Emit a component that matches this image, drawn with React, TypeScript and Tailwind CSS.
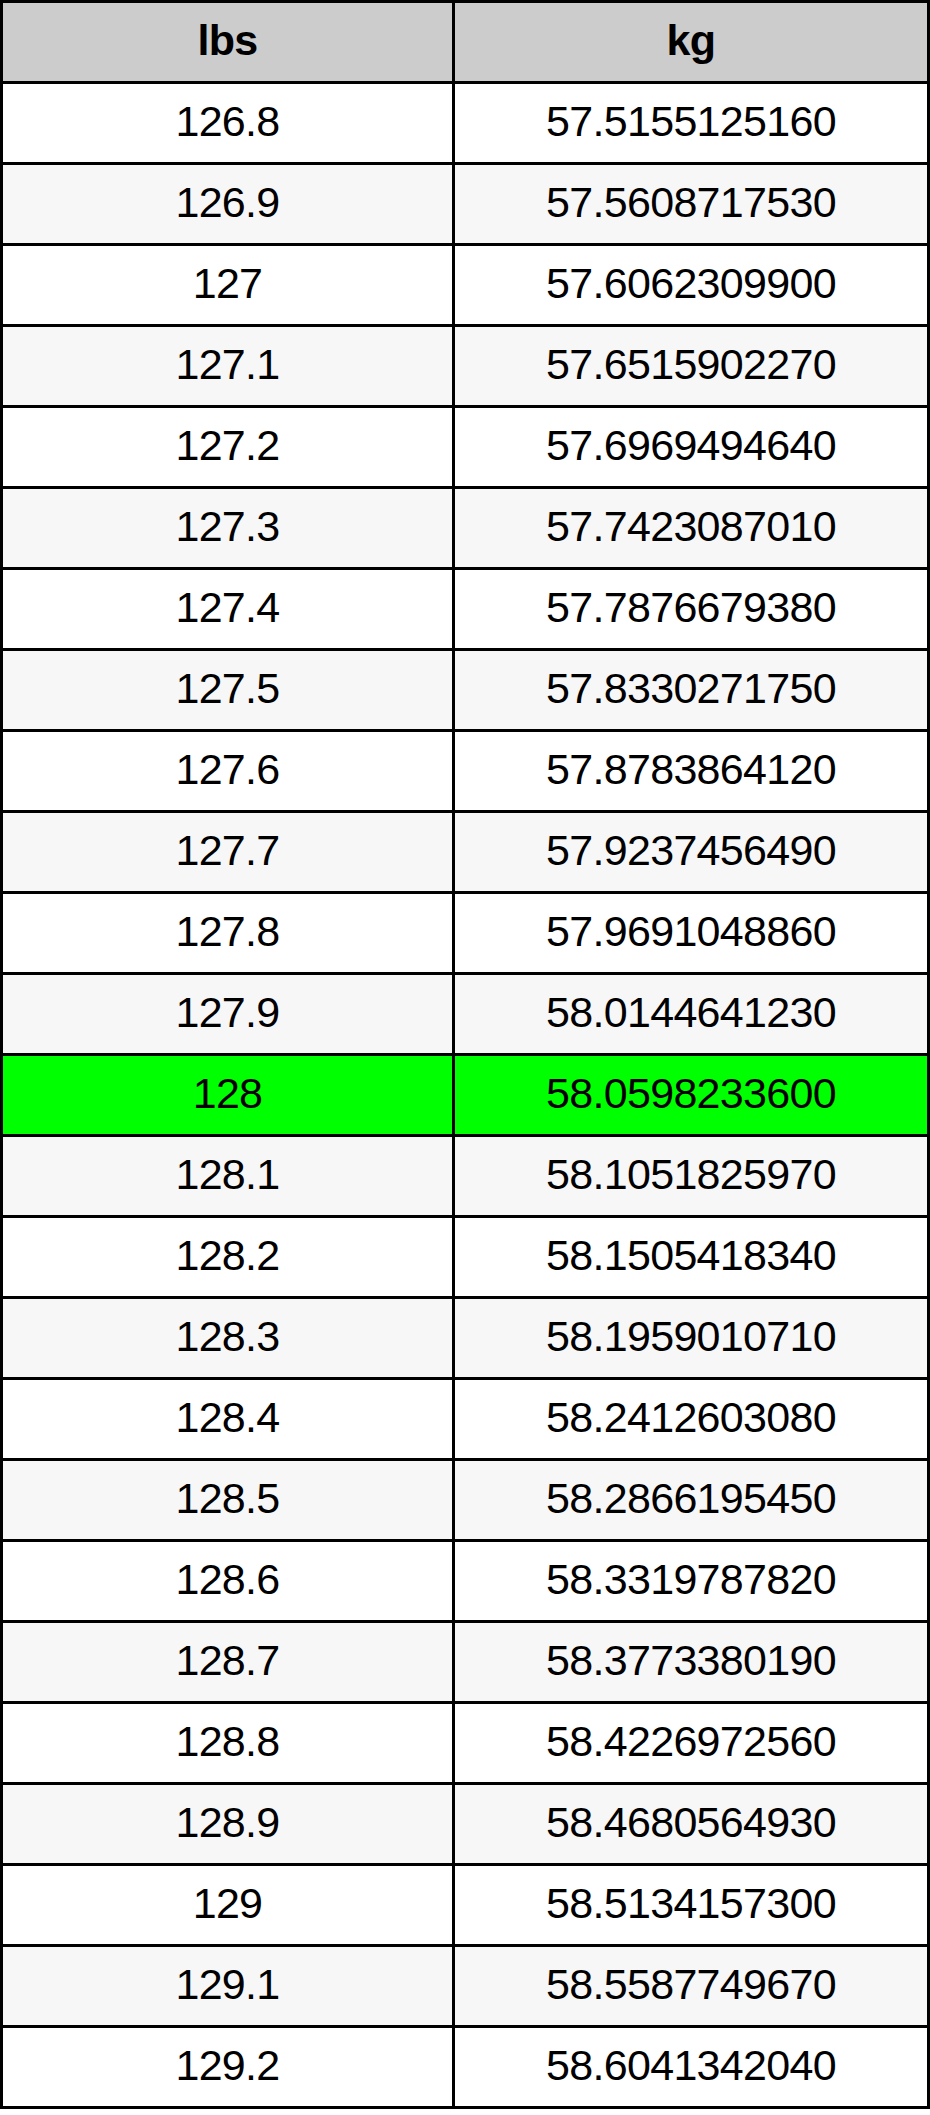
import React from "react";

const rows: [string, string][] = [
  ["126.8", "57.5155125160"],
  ["126.9", "57.5608717530"],
  ["127", "57.6062309900"],
  ["127.1", "57.6515902270"],
  ["127.2", "57.6969494640"],
  ["127.3", "57.7423087010"],
  ["127.4", "57.7876679380"],
  ["127.5", "57.8330271750"],
  ["127.6", "57.8783864120"],
  ["127.7", "57.9237456490"],
  ["127.8", "57.9691048860"],
  ["127.9", "58.0144641230"],
  ["128", "58.0598233600"],
  ["128.1", "58.1051825970"],
  ["128.2", "58.1505418340"],
  ["128.3", "58.1959010710"],
  ["128.4", "58.2412603080"],
  ["128.5", "58.2866195450"],
  ["128.6", "58.3319787820"],
  ["128.7", "58.3773380190"],
  ["128.8", "58.4226972560"],
  ["128.9", "58.4680564930"],
  ["129", "58.5134157300"],
  ["129.1", "58.5587749670"],
  ["129.2", "58.6041342040"],
];

export default function App() {
  return (
    <div
      className="w-[930px] bg-black p-[3px] flex flex-col gap-[3px] text-black text-[43px] leading-none tracking-[-0.7px]"
      style={{ fontFamily: '"Liberation Sans", Arial, sans-serif' }}
    >
      <div className="grid grid-cols-[449px_472px] gap-[3px]">
        <div className="h-[78px] bg-[#cccccc] flex items-center justify-center font-bold pb-[3px]">lbs</div>
        <div className="h-[78px] bg-[#cccccc] flex items-center justify-center font-bold pb-[3px]">kg</div>
      </div>
      {rows.map(([a, b], i) => {
        const bg = a === "128" ? "bg-[#00ff00]" : i % 2 === 1 ? "bg-[#f7f7f7]" : "bg-white";
        return (
          <div key={a} className="grid grid-cols-[449px_472px] gap-[3px]">
            <div className={`h-[78px] ${bg} flex items-center justify-center pb-[3px]`}>{a}</div>
            <div className={`h-[78px] ${bg} flex items-center justify-center pb-[3px]`}>{b}</div>
          </div>
        );
      })}
    </div>
  );
}
